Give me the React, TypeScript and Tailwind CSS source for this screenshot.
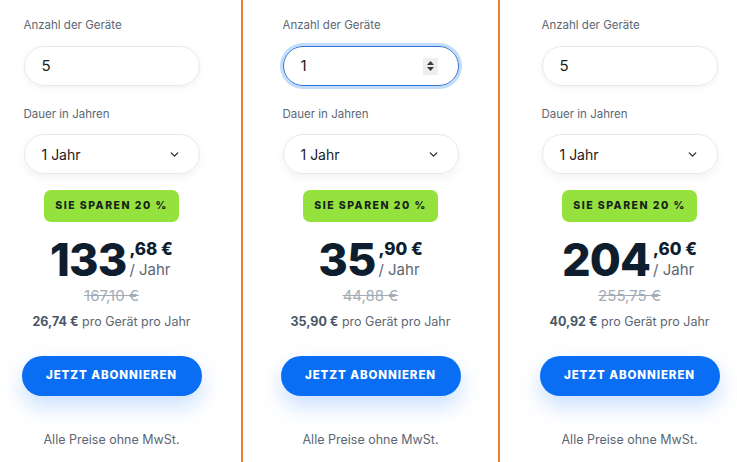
import React from "react";

type Plan = {
  devices: string;
  euros: string;
  cents: string;
  old: string;
  perDevice: string;
  active?: boolean;
};

const plans: Plan[] = [
  { devices: "5", euros: "133", cents: ",68 €", old: "167,10 €", perDevice: "26,74 €" },
  { devices: "1", euros: "35", cents: ",90 €", old: "44,88 €", perDevice: "35,90 €", active: true },
  { devices: "5", euros: "204", cents: ",60 €", old: "255,75 €", perDevice: "40,92 €" },
];

function Chevron() {
  return (
    <svg width="13" height="13" viewBox="0 0 24 24" fill="none" stroke="#1f2937" strokeWidth="2.3" strokeLinecap="round" strokeLinejoin="round">
      <path d="M6 9l6 6 6-6" />
    </svg>
  );
}

function Spinner() {
  return (
    <div className="flex h-[17px] w-[15px] flex-col items-center justify-center gap-[2px] bg-[#eeeeee]">
      <svg width="7" height="4" viewBox="0 0 7 4">
        <path d="M3.5 0L7 4H0z" fill="#3a3a3a" />
      </svg>
      <svg width="7" height="4" viewBox="0 0 7 4">
        <path d="M0 0h7L3.5 4z" fill="#3a3a3a" />
      </svg>
    </div>
  );
}

function PlanColumn({ plan }: { plan: Plan }) {
  return (
    <div
      className={
        "flex w-[259px] shrink-0 flex-col items-center border-x-2 px-[40px] " +
        (plan.active ? "border-[#e3862f]" : "border-transparent")
      }
    >
      <div className="w-[176px]">
        <div className="pt-[17px] text-[11.5px] leading-[16px] text-[#5c6773]">Anzahl der Geräte</div>
        {plan.active ? (
          <div className="mt-[13px] flex h-[40px] items-center justify-between rounded-full border border-[#2f74d6] pl-[17px] pr-[20px] text-[15px] text-[#1c1c1c] shadow-[0_0_0_3px_#c2dcfb]">
            <span>{plan.devices}</span>
            <Spinner />
          </div>
        ) : (
          <div className="mt-[13px] flex h-[40px] items-center rounded-full border border-[#e6e8eb] pl-[17px] text-[15px] text-[#1c1c1c] shadow-[0_2px_6px_rgba(0,0,0,0.05)]">
            {plan.devices}
          </div>
        )}
        <div className="mt-[20px] text-[11.5px] leading-[16px] text-[#5c6773]">Dauer in Jahren</div>
        <div className="mt-[12px] flex h-[40px] items-center justify-between rounded-full border border-[#e6e8eb] pl-[17px] pr-[18px] text-[14px] text-[#1c1c1c] shadow-[0_4px_10px_rgba(0,0,0,0.05)]">
          <span>1 Jahr</span>
          <Chevron />
        </div>
      </div>

      <div className="mt-[16px] flex h-[32px] w-[135px] items-center justify-center rounded-[7px] bg-[#95e23e] text-[10.5px] font-extrabold tracking-[0.14em] text-[#15241c]">
        SIE SPAREN 20 %
      </div>

      <div className="mt-[18px] flex items-start">
        <span className="text-[45px] leading-[40px] font-extrabold tracking-[-0.02em] text-[#0e1e2e]">
          {plan.euros}
        </span>
        <div className="ml-[3px] flex flex-col">
          <span className="text-[17px] leading-[18px] font-extrabold text-[#0e1e2e]">{plan.cents}</span>
          <span className="mt-[3px] text-[15px] leading-[18px] text-[#5c6773]">/ Jahr</span>
        </div>
      </div>

      <div className="mt-[6px] text-[15px] leading-[20px] text-[#a2abb5] line-through">{plan.old}</div>
      <div className="mt-[7px] text-[12.5px] leading-[18px] text-[#5c6773]">
        <span className="font-bold text-[#4a5665]">{plan.perDevice}</span> pro Gerät pro Jahr
      </div>

      <div className="mt-[25px] flex h-[40px] w-[180px] items-center justify-center rounded-full bg-[#0a6ef5] text-[11.5px] font-extrabold tracking-[0.08em] text-white shadow-[0_10px_22px_rgba(10,110,245,0.22)]">
        JETZT ABONNIEREN
      </div>

      <div className="mt-[35px] text-[12.5px] leading-[18px] text-[#5c6773]">Alle Preise ohne MwSt.</div>
    </div>
  );
}

export default function App() {
  return (
    <div className="h-[462px] w-[737px] overflow-hidden bg-white font-['Inter','Noto_Sans',sans-serif]">
      <div className="ml-[-18px] flex h-full">
        {plans.map((p, i) => (
          <PlanColumn key={i} plan={p} />
        ))}
      </div>
    </div>
  );
}
